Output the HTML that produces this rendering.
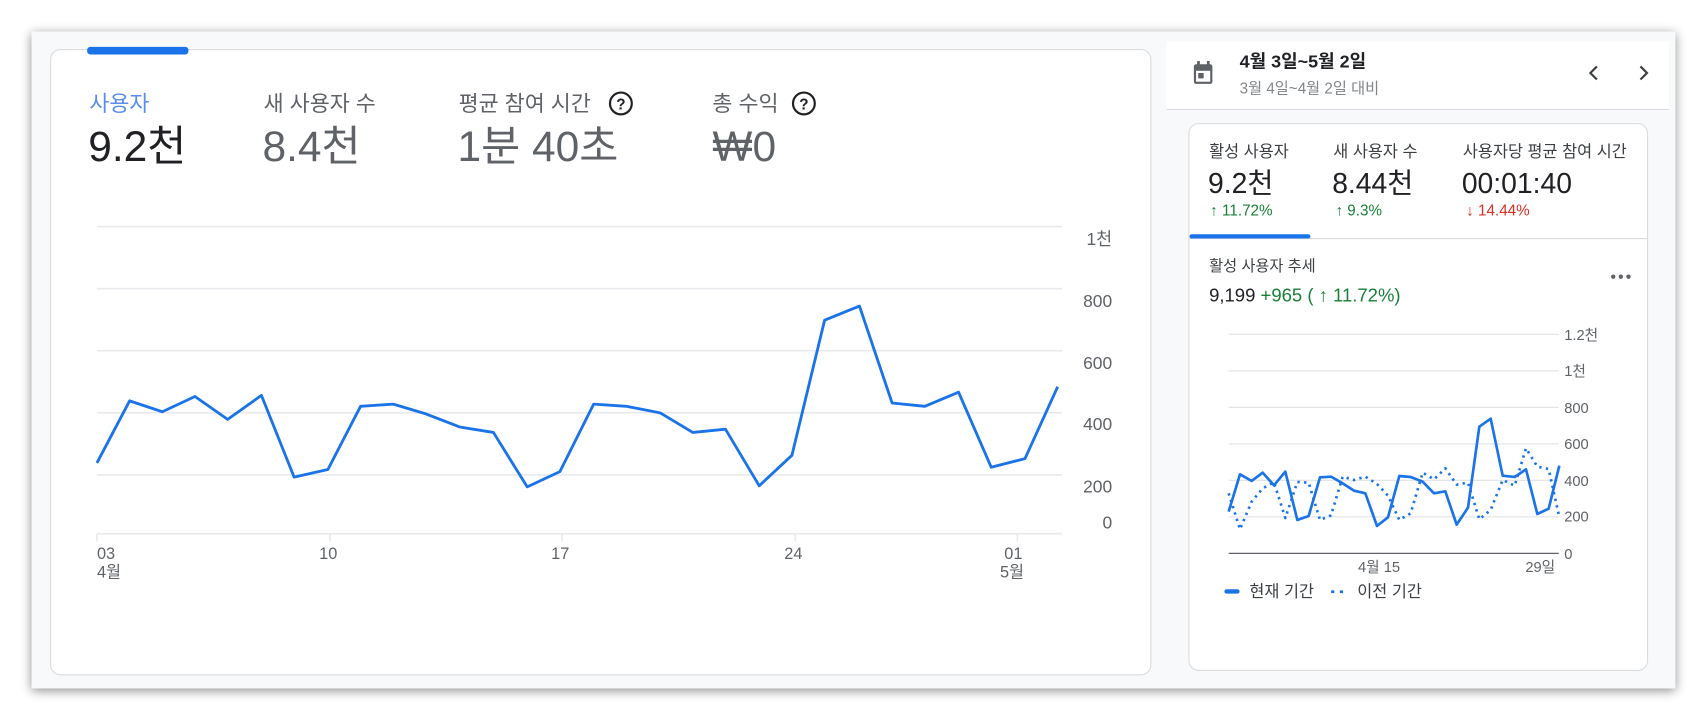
<!DOCTYPE html>
<html><head><meta charset="utf-8"><style>
html,body{margin:0;padding:0;background:#fff;width:1708px;height:720px;overflow:hidden}
svg{display:block}
text{font-family:"Liberation Sans","Noto Sans CJK KR",sans-serif}
</style></head><body>
<svg width="1708" height="720" viewBox="0 0 1568 661" preserveAspectRatio="none" xmlns="http://www.w3.org/2000/svg">
<defs>
<filter id="sh" x="-5%" y="-10%" width="110%" height="120%"><feDropShadow dx="0" dy="2" stdDeviation="5" flood-color="#000" flood-opacity="0.45"/></filter>
</defs>
<rect width="1568" height="661" fill="#fff"/>
<rect x="29" y="29" width="1509" height="603" fill="#f8f9fa" filter="url(#sh)"/>
<!-- left card -->
<rect x="46.5" y="45.5" width="1010" height="574" rx="9" fill="#fff" stroke="#dadce0"/>
<rect x="80" y="43" width="93" height="7" rx="3" fill="#1a73e8"/>
<text x="82" y="102" font-size="20" fill="#5b8def">사용자</text>
<text x="242" y="102" font-size="20" fill="#5f6368">새 사용자 수</text>
<text x="421" y="102" font-size="20" fill="#5f6368">평균 참여 시간</text>
<text x="654" y="102" font-size="20" fill="#5f6368">총 수익</text>
<g fill="none" stroke="#202124" stroke-width="2"><circle cx="570" cy="95" r="10"/><circle cx="738" cy="95" r="10"/></g>
<text x="570" y="100.5" font-size="14" font-weight="bold" fill="#202124" text-anchor="middle">?</text>
<text x="738" y="100.5" font-size="14" font-weight="bold" fill="#202124" text-anchor="middle">?</text>
<text x="81" y="148" font-size="39" fill="#202124">9.2천</text>
<text x="241" y="148" font-size="39" fill="#5f6368">8.4천</text>
<text x="420" y="148" font-size="39" fill="#5f6368">1분 40초</text>
<text x="654" y="148" font-size="39" fill="#5f6368">₩0</text>
<g stroke="#e8eaed" stroke-width="1.5">
<line x1="89" y1="208" x2="975" y2="208"/><line x1="89" y1="265" x2="975" y2="265"/>
<line x1="89" y1="322" x2="975" y2="322"/><line x1="89" y1="379" x2="975" y2="379"/>
<line x1="89" y1="436" x2="975" y2="436"/><line x1="89" y1="490" x2="975" y2="490"/>
<line x1="89" y1="490" x2="89" y2="497"/><line x1="303" y1="490" x2="303" y2="497"/><line x1="516" y1="490" x2="516" y2="497"/><line x1="730" y1="490" x2="730" y2="497"/><line x1="934" y1="490" x2="934" y2="497"/>
</g>
<g font-size="16" fill="#5f6368" text-anchor="end">
<text x="1021" y="225">1천</text><text x="1021" y="282">800</text><text x="1021" y="339">600</text><text x="1021" y="395">400</text><text x="1021" y="452">200</text><text x="1021" y="485">0</text>
</g>
<g font-size="15" fill="#5f6368">
<text x="89" y="513">03</text><text x="89" y="530">4월</text><text x="293" y="513">10</text><text x="506" y="513">17</text><text x="720" y="513">24</text><text x="922" y="513">01</text><text x="918" y="530">5월</text>
</g>
<polyline fill="none" stroke="#1a73e8" stroke-width="2.6" stroke-linejoin="round" points="89,425 119,368 149,378 179,364 209,385 240,363 270,438 301,431 331,373 361,371 391,380 422,392 453,397 484,447 514,433 545,371 575,373 606,379 636,397 666,394 697,446 727,418 757,294 789,281 819,370 849,373 880,360 910,429 941,421 971,355"/>
<!-- right header -->
<rect x="1071" y="38" width="461" height="62" fill="#fff"/>
<line x1="1071" y1="100.5" x2="1532" y2="100.5" stroke="#dadce0"/>
<g fill="#5f6368"><rect x="1096" y="59" width="17" height="18" rx="2"/><rect x="1099" y="56" width="2.5" height="5"/><rect x="1108" y="56" width="2.5" height="5"/></g>
<rect x="1098" y="65" width="13" height="10" fill="#fff"/><rect x="1100" y="67" width="5" height="5" fill="#5f6368"/>
<text x="1138" y="62" font-size="16.5" font-weight="bold" fill="#202124">4월 3일~5월 2일</text>
<text x="1138" y="86" font-size="14" fill="#80868b">3월 4일~4월 2일 대비</text>
<g fill="none" stroke="#3c4043" stroke-width="2"><polyline points="1466,61 1460,67 1466,73"/><polyline points="1506,61 1512,67 1506,73"/></g>
<!-- right card -->
<rect x="1091.5" y="113.5" width="421" height="502" rx="9" fill="#fff" stroke="#dadce0"/>
<g font-size="15" fill="#3c4043"><text x="1110" y="144">활성 사용자</text><text x="1224" y="144">새 사용자 수</text><text x="1343" y="144">사용자당 평균 참여 시간</text></g>
<g font-size="26" fill="#202124"><text x="1109" y="177">9.2천</text><text x="1223" y="177">8.44천</text><text x="1342" y="177">00:01:40</text></g>
<g font-size="14"><text x="1111" y="198" fill="#188038">↑ 11.72%</text><text x="1226" y="198" fill="#188038">↑ 9.3%</text><text x="1346" y="198" fill="#d93025">↓ 14.44%</text></g>
<line x1="1092" y1="219" x2="1512" y2="219" stroke="#dadce0"/>
<rect x="1092" y="215" width="111" height="4" rx="2" fill="#1a73e8"/>
<text x="1110" y="249" font-size="14" fill="#3c4043">활성 사용자 추세</text>
<text x="1110" y="277" font-size="17" fill="#202124">9,199 <tspan fill="#188038">+965 ( ↑ 11.72%)</tspan></text>
<g fill="#5f6368"><circle cx="1481" cy="254" r="2"/><circle cx="1488" cy="254" r="2"/><circle cx="1495" cy="254" r="2"/></g>
<g stroke="#e3e5e8" stroke-width="1.2">
<line x1="1128" y1="307" x2="1431" y2="307"/><line x1="1128" y1="340.5" x2="1431" y2="340.5"/><line x1="1128" y1="374" x2="1431" y2="374"/><line x1="1128" y1="407.5" x2="1431" y2="407.5"/><line x1="1128" y1="441" x2="1431" y2="441"/><line x1="1128" y1="474.5" x2="1431" y2="474.5"/>
</g>
<line x1="1128" y1="508" x2="1431" y2="508" stroke="#5f6368" stroke-width="1.2"/>
<g font-size="13.5" fill="#5f6368">
<text x="1436" y="312">1.2천</text><text x="1436" y="345">1천</text><text x="1436" y="379">800</text><text x="1436" y="412">600</text><text x="1436" y="446">400</text><text x="1436" y="479">200</text><text x="1436" y="513">0</text>
<text x="1266" y="525" text-anchor="middle">4월 15</text><text x="1414" y="525" text-anchor="middle">29일</text>
</g>
<g transform="scale(0.91803) translate(1150,320) scale(0.333333)" fill="none" stroke="#1a73e8" stroke-width="8" stroke-linejoin="round">
<polyline points="236,575 270,463 305,483 338,458 372,496 406,455 442,600 476,588 510,472 543,470 578,490 612,512 646,520 681,618 714,592 748,468 782,471 818,485 852,520 886,514 920,614 954,563 988,320 1022,296 1058,467 1094,471 1128,448 1162,582 1196,566 1228,437"/>
<polyline stroke-dasharray="7 13" points="236,520 270,628 305,545 338,505 372,487 406,594 442,486 476,488 510,600 543,586 578,470 612,480 646,470 681,492 714,527 748,600 782,580 818,458 852,478 886,445 920,494 954,488 988,598 1022,570 1058,480 1094,497 1128,385 1162,440 1196,447 1228,592"/>
</g>
<rect x="1124" y="541" width="14" height="4" rx="2" fill="#1a73e8"/>
<text x="1147" y="548" font-size="15" fill="#3c4043">현재 기간</text>
<g fill="#1a73e8"><rect x="1222" y="542" width="3" height="2.5"/><rect x="1230" y="542" width="3" height="2.5"/></g>
<text x="1246" y="548" font-size="15" fill="#3c4043">이전 기간</text>
</svg>
</body></html>
